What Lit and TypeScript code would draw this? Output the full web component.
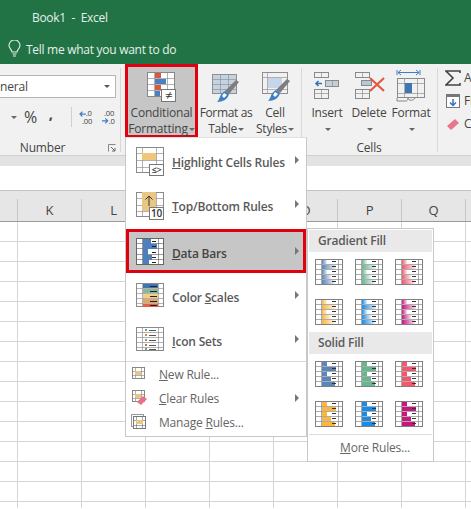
import { LitElement, html, css, svg } from "lit";
import { customElement } from "lit/decorators.js";

const G = "#8a8a8a";
function grid(x: number, y: number, w: number, h: number, xs: number[], ys: number[], c = G) {
  return svg`<g stroke=${c} fill="none" shape-rendering="crispEdges">
    <rect x=${x + 0.5} y=${y + 0.5} width=${w - 1} height=${h - 1}></rect>
    <g stroke-opacity="0.65">
    ${xs.map((v) => svg`<line x1=${x + v + 0.5} x2=${x + v + 0.5} y1=${y} y2=${y + h}></line>`)}
    ${ys.map((v) => svg`<line y1=${y + v + 0.5} y2=${y + v + 0.5} x1=${x} x2=${x + w}></line>`)}
    </g>
  </g>`;
}
function rect(x: number, y: number, w: number, h: number, c: string) {
  return svg`<rect x=${x} y=${y} width=${w} height=${h} fill=${c} shape-rendering="crispEdges"></rect>`;
}
function badge(x: number, y: number, w: number, h: number, t: string, fs = 10) {
  return svg`<rect x=${x + 0.5} y=${y + 0.5} width=${w - 1} height=${h - 1} fill="#fff" stroke="#777" shape-rendering="crispEdges"></rect>
  <text x=${x + w / 2} y=${y + h / 2 + fs * 0.36} font-size=${fs} text-anchor="middle" fill="#333" font-family="Open Sans, sans-serif">${t}</text>`;
}
function brush(dx: number, dy: number) {
  return svg`<g transform="translate(${dx} ${dy})">
    <path d="M26 6 L29 8 L19 20 L15 17 Z" fill="#7d7d7d"></path>
    <path d="M15 17 L19 20 C18 25 13 28 7 28 C10 26 9 20 15 17 Z" fill="#3f7fc4"></path>
    <path d="M14 19 L17 21 L14 24 L12 22 Z" fill="#fff"></path>
  </g>`;
}
const dashes = [2, 7, 12, 17, 22];
function barIcon(colors: string[], id: string, solid: boolean) {
  const widths = [5, 14, 5, 9, 13];
  const fill = solid ? colors[0] : `url(#${id})`;
  return html`<svg class="mini" width="28" height="26" viewBox="0 0 28 26">
    <defs>
      <linearGradient id=${id} x1="0" x2="1" y1="0" y2="0">
        <stop offset="0" stop-color=${colors[0]}></stop>
        <stop offset="1" stop-color=${colors[0]} stop-opacity="0.12"></stop>
      </linearGradient>
    </defs>
    <rect width="28" height="26" fill="#fff"></rect>
    ${grid(0, 0, 28, 26, [6, 23], [5, 10, 15, 20], "#808080")}
    ${widths.map((w, i) => rect(7, 1 + i * 5, w, 4, fill))}
    ${dashes.map((y) => rect(17, y, 4, 1, "#333"))}
  </svg>`;
}

const menuIcons: Record<string, unknown> = {
  highlight: svg`${rect(2, 9, 28, 26, "#fff")}${grid(2, 9, 28, 26, [6, 20], [6, 13, 20])}${rect(8, 15, 14, 7, "#eec777")}${badge(15, 26, 15, 12, "≤>", 9)}`,
  top: svg`${rect(2, 10, 28, 25, "#fff")}${grid(2, 10, 28, 25, [6, 20], [6, 13, 19])}${rect(8, 10, 14, 19, "#e8c684")}
    <path d="M15 24 V14 M11.5 17.5 L15 14 L18.5 17.5" stroke="#333" fill="none"></path>${badge(15, 25, 15, 13, "10", 10)}`,
  bars: svg`${rect(2, 9, 28, 27, "#fff")}${grid(2, 9, 28, 27, [6, 22], [5, 10, 16, 21], "#666")}
    ${rect(9, 10, 8, 5, "#4f7fba")}${rect(9, 15, 14, 5, "#4f7fba")}${rect(9, 20, 5, 6, "#4f7fba")}${rect(9, 26, 9, 5, "#4f7fba")}${rect(9, 31, 6, 4, "#4f7fba")}
    ${[12, 17, 23, 28, 33].map((y) => rect(18, y, 4, 1, "#222"))}`,
  scales: svg`${rect(2, 10, 28, 24, "#fff")}${grid(2, 10, 28, 24, [6, 22], [5, 10, 15, 20])}
    ${rect(9, 11, 15, 4, "#3f77b5")}${rect(9, 16, 15, 4, "#86b89a")}${rect(9, 21, 15, 4, "#f1cf86")}${rect(9, 26, 15, 4, "#e8a45f")}${rect(9, 31, 15, 3, "#e0604a")}
    ${[13, 18, 23, 28, 32].map((y) => rect(16, y, 7, 1, "#222"))}`,
  icons: svg`${grid(2, 10, 28, 24, [6, 22], [5, 10, 15, 20])}
    ${[["#6aa58f", 12], ["#e0844a", 17], ["#6aa58f", 22], ["#e0604a", 27], ["#6aa58f", 31]].map(([c, y]) => rect(11, y as number, 2, 2, c as string))}
    ${[13, 18, 23, 28, 32].map((y) => rect(15, y, 7, 1, "#555"))}`,
  neu: svg`${grid(1, 1, 13, 12, [3, 9], [4, 8], "#888")}${rect(4, 5, 6, 4, "#e8c684")}`,
  clear: svg`${grid(1, 0, 13, 12, [3, 9], [4, 8], "#888")}${rect(4, 4, 6, 4, "#e8c684")}
    <path d="M6 12 L12 6 L16 9 L10 15 Z" fill="#e8708a"></path>`,
  manage: svg`<rect x="0.5" y="0.5" width="12" height="12" fill="none" stroke="#999" shape-rendering="crispEdges"></rect>
    <rect x="2" y="2" width="13" height="13" fill="#fff"></rect>${grid(2, 2, 13, 13, [3, 9], [4, 9], "#777")}${rect(5, 6, 7, 4, "#e8c684")}`,
};

const sub1 = [
  ["#5b86bb", "g-b"], ["#66b78c", "g-g"], ["#f5566c", "g-r"],
  ["#fbb73e", "g-o"], ["#1a8ce6", "g-l"], ["#c9167f", "g-m"],
];

@customElement("app-root")
export class AppRoot extends LitElement {
  static styles = css`
    :host { display: block; width: 471px; height: 509px; position: relative; overflow: hidden; background: #fff;
      font-family: "Open Sans", "Noto Sans", sans-serif; font-size: 12px; color: #444; letter-spacing: -0.2px; }
    * { box-sizing: border-box; }
    svg { display: block; }
    .title { height: 64px; background: #217346; color: #e6f0ea; }
    .doc { height: 34px; padding-left: 32px; font-size: 12px; line-height: 35px; white-space: pre; letter-spacing: -0.3px; }
    .tell { height: 30px; display: flex; align-items: center; gap: 5px; padding-left: 8px; font-size: 12px; letter-spacing: -0.28px; }
    .ribbon { height: 92px; background: #f1f1f1; display: flex; overflow: hidden; border-bottom: 1px solid #d0d0d0; }
    .sep { width: 1px; height: 84px; margin-top: 4px; background: #d8d8d8; flex: none; }
    .group { display: flex; flex-direction: column; flex: none; height: 92px; position: relative; }
    .tools { height: 77px; display: flex; }
    .glabel { height: 14px; line-height: 14px; text-align: center; color: #444; }
    .number { margin-left: -35px; width: 155px; }
    .numtools { flex-direction: column; padding: 11px 4px 0 0; }
    .combo { height: 23px; background: #fff; border: 1px solid #b5b5b5; display: flex; align-items: center; justify-content: space-between;
      padding: 0 5px 0 19px; font-size: 12px; }
    .numrow { display: flex; align-items: center; height: 26px; margin-top: 6px; padding-left: 45px; position: relative; }
    .pct { font-size: 16px; margin-left: 7px; width: 20px; color: #444; }
    .comma { font-size: 15px; font-weight: 700; width: 14px; margin-left: 1px; margin-right: 11px; text-align: center; line-height: 8px; height: 16px; color: #444; }
    .numsep { width: 1px; height: 20px; background: #d0d0d0; margin: 0 7px 0 2px; }
    .launch { position: absolute; right: 4px; bottom: 4px; }
    .arrow { display: inline-block; width: 0; height: 0; border: 3px solid transparent; border-top: 3px solid #666; border-bottom: 0; vertical-align: middle; margin-left: 1px; flex: none; }
    .styles { width: 180px; padding-left: 4px; }
    .btn { display: flex; flex-direction: column; align-items: center; height: 74px; padding-top: 3px; flex: none; line-height: 16px; text-align: center; white-space: nowrap; }
    .btn svg { flex: none; }
    .btn.red { width: 73px; background: #c6c6c6; box-shadow: inset 0 0 0 3px #e0000f; }
    .ft { width: 56px; letter-spacing: -0.35px; }
    .cs { width: 42px; }
    .cell { width: 42px; }
    .cellsgroup { width: 135px; padding-left: 4px; }
    .cellsgroup .glabel { padding-right: 5px; }
    .edit { flex: 1; display: flex; flex-direction: column; padding: 2px 0 0 7px; min-width: 0; }
    .erow { height: 23px; display: flex; align-items: center; gap: 3px; white-space: nowrap; font-size: 12px; }
    .erow svg { flex: none; }
    .strip { height: 10px; background: #e3e3e3; }
    .formula { height: 25px; background: #fff; border-bottom: 1px solid #c4c4c4; }
    .cols { height: 31px; background: #e6e6e6; border-bottom: 1px solid #9b9b9b; display: grid;
      grid-template-columns: 18px repeat(8, 64px); padding-top: 8px; font-size: 13px; }
    .cols div { border-right: 1px solid #c6c6c6; text-align: center; line-height: 22px; color: #444; }
    .sheet { height: 286px;
      background-image: linear-gradient(to right, #d4d4d4 1px, transparent 1px), linear-gradient(to bottom, #d4d4d4 1px, transparent 1px);
      background-size: 64px 20px; background-position: 17px 19px; }
    .menu { position: absolute; left: 125px; top: 137px; width: 182px; height: 300px; background: #fff; border: 1px solid #c8c8c8; border-top-color: #e0e0e0; display: flex; flex-direction: column; }
    .item { height: 44px; display: flex; align-items: center; padding: 0 7px 0 8px; font-weight: 600; font-size: 12px; color: #5a5a5a; flex: none; }
    .item svg { margin-right: 6px; flex: none; }
    .item .t { padding-top: 4px; flex: 1; white-space: nowrap; }
    .tri { width: 0; height: 0; border-left: 4px solid #777; border-top: 4px solid transparent; border-bottom: 4px solid transparent; flex: none; }
    .first { margin-top: 0; }
    .active { margin-top: 3px; background: #c6c6c6; box-shadow: inset 0 0 0 3px #e0000f; color: #444; }
    .msep { height: 1px; background: #d8d8d8; margin-top: 0; flex: none; }
    .small { height: 24px; display: flex; align-items: center; padding: 0 7px 0 5px; color: #666; flex: none; }
    .small svg { margin-right: 12px; flex: none; }
    .small .t { flex: 1; }
    .sub { position: absolute; left: 307px; top: 228px; width: 127px; height: 234px; background: #fff; border: 1px solid #c8c8c8; padding: 1px; display: flex; flex-direction: column; }
    .head { height: 22px; flex: none; background: #e9e9e9; padding-left: 9px; line-height: 22px; font-weight: 600; font-size: 12px; color: #5a5a5a; }
    .pal { display: grid; grid-template-columns: repeat(3, 28px); column-gap: 12px; row-gap: 14px; padding: 7px 0 7px 6px; flex: none; }
    .more { border-top: 1px solid #dedede; flex: 1; text-align: center; line-height: 26px; color: #666; padding-left: 9px; }
  `;

  private tip(c = "#666") { return html`<span class="arrow" style="border-top-color:${c}"></span>`; }

  render() {
    const letters = ["", "K", "L", "", "", "O", "P", "Q", "R"];
    return html`
      <div class="title">
        <div class="doc">Book1  -  Excel</div>
        <div class="tell">
          <svg width="13" height="18" viewBox="0 0 13 18"><path d="M4 12 C4 9.5 1 8.5 1 5.5 A5.5 5.5 0 0 1 12 5.5 C12 8.5 9 9.5 9 12 Z" fill="none" stroke="#e6f0ea" stroke-width="1.1"></path><path d="M4.5 14 H8.5 M5 16 H8" stroke="#e6f0ea" stroke-width="1.2"></path></svg>
          <span>Tell me what you want to do</span>
        </div>
      </div>
      <div class="ribbon">
        <div class="group number">
          <div class="tools numtools">
            <div class="combo"><span>General</span>${this.tip("#555")}</div>
            <div class="numrow">
              ${this.tip("#666")}<span class="pct">%</span><span class="comma">,</span><span class="numsep"></span>
              <svg width="16" height="16" viewBox="0 0 16 16"><text x="7" y="7" font-size="8" fill="#444" font-family="Open Sans, sans-serif">.0</text><text x="3" y="15" font-size="8" fill="#444" font-family="Open Sans, sans-serif">.00</text><path d="M1 5 H7 M3.5 2.5 L1 5 L3.5 7.5" stroke="#3f7fc4" fill="none" stroke-width="1.2"></path></svg>
              <span style="width:7px"></span>
              <svg width="16" height="16" viewBox="0 0 16 16"><text x="3" y="7" font-size="8" fill="#444" font-family="Open Sans, sans-serif">.00</text><text x="8" y="15" font-size="8" fill="#444" font-family="Open Sans, sans-serif">.0</text><path d="M1 12 H7 M4.5 9.5 L7 12 L4.5 14.5" stroke="#3f7fc4" fill="none" stroke-width="1.2"></path></svg>
            </div>
          </div>
          <div class="glabel">Number</div>
          <svg class="launch" width="8" height="8" viewBox="0 0 8 8"><path d="M0.5 7.5 V0.5 H7.5" fill="none" stroke="#888"></path><path d="M3 3 L7 7 M7 4 V7 H4" fill="none" stroke="#666"></path></svg>
        </div>
        <div class="sep"></div>
        <div class="group styles">
          <div class="tools">
            <div class="btn red">
              <svg width="73" height="38" viewBox="0 0 73 38">
                <rect x="22" y="5" width="28" height="25" fill="#fff"></rect>
                ${rect(30, 6, 6, 5, "#d9593d")}${rect(30, 12, 11, 5, "#4a7fc0")}${rect(30, 18, 6, 5, "#d9593d")}${rect(30, 24, 5, 5, "#4a7fc0")}
                ${grid(22, 5, 28, 25, [7, 20], [6, 12, 18], "#888")}
                ${badge(36, 22, 15, 13, "≠", 13)}
              </svg>
              <div>Conditional</div>
              <div>Formatting${this.tip()}</div>
            </div>
            <div class="btn ft">
              <svg width="56" height="38" viewBox="0 0 56 38">
                ${rect(15, 8, 24, 19, "#c5d2e2")}
                ${grid(14, 7, 25, 20, [8, 16], [5, 10, 15], "#8f8f8f")}
                ${brush(12, 7)}
              </svg>
              <div>Format as</div>
              <div>Table${this.tip()}</div>
            </div>
            <div class="btn cs">
              <svg width="42" height="38" viewBox="0 0 42 38">
                ${rect(14, 11, 14, 10, "#c5d6ea")}
                ${grid(8, 5, 26, 22, [5], [5, 17], "#8f8f8f")}
                ${brush(7, 6)}
              </svg>
              <div>Cell</div>
              <div>Styles${this.tip()}</div>
            </div>
          </div>
        </div>
        <div class="sep"></div>
        <div class="group cellsgroup">
          <div class="tools">
            <div class="btn cell">
              <svg width="42" height="38" viewBox="0 0 42 38">
                ${grid(8, 5, 15, 6, [7], [])}
                <path d="M10 16.5 H16 M12.5 14 L10 16.5 L12.5 19" stroke="#2f75bd" stroke-width="1.6" fill="none"></path>
                ${rect(19, 14, 14, 5, "#c3cfdc")}${grid(19, 13, 14, 7, [7], [])}
                ${grid(8, 22, 15, 10, [7], [4])}
              </svg>
              <div>Insert</div>
              <div>${this.tip()}</div>
            </div>
            <div class="btn cell">
              <svg width="42" height="38" viewBox="0 0 42 38">
                ${grid(7, 5, 15, 6, [7], [])}
                ${rect(13, 13, 11, 6, "#b9c6d4")}${grid(13, 13, 11, 6, [], [])}
                ${grid(7, 22, 15, 10, [7], [4])}
                <path d="M22 11 L36 24 M36 11 L22 24" stroke="#e2593f" stroke-width="2.2"></path>
              </svg>
              <div>Delete</div>
              <div>${this.tip()}</div>
            </div>
            <div class="btn cell">
              <svg width="42" height="38" viewBox="0 0 42 38">
                <path d="M7 3 V8 M30 3 V8 M8 5.5 H29 M11 3 L8 5.5 L11 8 M26 3 L29 5.5 L26 8" stroke="#3f7fc4" fill="none"></path>
                ${grid(7, 11, 28, 20, [7, 20], [5, 15])}
                ${rect(15, 16, 7, 10, "#3f74b5")}
                <path d="M7 31 V34 H16 C17 34 18 33 18 31 M18 31 C18 34 24 34 25 31" stroke="#888" fill="none"></path>
              </svg>
              <div>Format</div>
              <div>${this.tip()}</div>
            </div>
          </div>
          <div class="glabel">Cells</div>
        </div>
        <div class="sep"></div>
        <div class="edit">
          <div class="erow"><svg width="16" height="16" viewBox="0 0 16 16"><path d="M15 3 V1 H1 L8 8 L1 15 H15 V13" fill="none" stroke="#444" stroke-width="1.6"></path></svg><span>AutoSum</span></div>
          <div class="erow"><svg width="16" height="16" viewBox="0 0 16 16"><rect x="1.5" y="1.5" width="13" height="13" fill="#fff" stroke="#777"></rect><rect x="1" y="1" width="14" height="3" fill="#777"></rect><path d="M8 6 V12 M5 9.5 L8 12.5 L11 9.5" stroke="#2f75bd" stroke-width="1.5" fill="none"></path></svg><span>Fill</span></div>
          <div class="erow"><svg width="16" height="16" viewBox="0 0 16 16"><path d="M2 10 L10 3 L14 7 L6 14 Z" fill="#e8768c"></path></svg><span>Clear</span></div>
        </div>
      </div>
      <div class="strip"></div>
      <div class="formula"></div>
      <div class="cols">${letters.map((l) => html`<div>${l}</div>`)}</div>
      <div class="sheet"></div>

      <div class="menu">
        <div class="item first"><svg width="32" height="44" viewBox="0 0 32 44">${menuIcons.highlight}</svg><span class="t"><u>H</u>ighlight Cells Rules</span><span class="tri"></span></div>
        <div class="item"><svg width="32" height="44" viewBox="0 0 32 44">${menuIcons.top}</svg><span class="t"><u>T</u>op/Bottom Rules</span><span class="tri"></span></div>
        <div class="item active"><svg width="32" height="44" viewBox="0 0 32 44">${menuIcons.bars}</svg><span class="t"><u>D</u>ata Bars</span><span class="tri"></span></div>
        <div class="item"><svg width="32" height="44" viewBox="0 0 32 44">${menuIcons.scales}</svg><span class="t">Color <u>S</u>cales</span><span class="tri"></span></div>
        <div class="item"><svg width="32" height="44" viewBox="0 0 32 44">${menuIcons.icons}</svg><span class="t"><u>I</u>con Sets</span><span class="tri"></span></div>
        <div class="msep"></div>
        <div class="small"><svg width="16" height="16" viewBox="0 0 16 16">${menuIcons.neu}</svg><span class="t"><u>N</u>ew Rule...</span></div>
        <div class="small"><svg width="16" height="16" viewBox="0 0 16 16">${menuIcons.clear}</svg><span class="t"><u>C</u>lear Rules</span><span class="tri"></span></div>
        <div class="small"><svg width="16" height="16" viewBox="0 0 16 16">${menuIcons.manage}</svg><span class="t">Manage <u>R</u>ules...</span></div>
      </div>

      <div class="sub">
        <div class="head">Gradient Fill</div>
        <div class="pal">${sub1.map(([c, id]) => barIcon([c], id, false))}</div>
        <div class="head">Solid Fill</div>
        <div class="pal">${sub1.map(([c, id]) => barIcon([c], id + "s", true))}</div>
        <div class="more"><u>M</u>ore Rules...</div>
      </div>
    `;
  }
}
